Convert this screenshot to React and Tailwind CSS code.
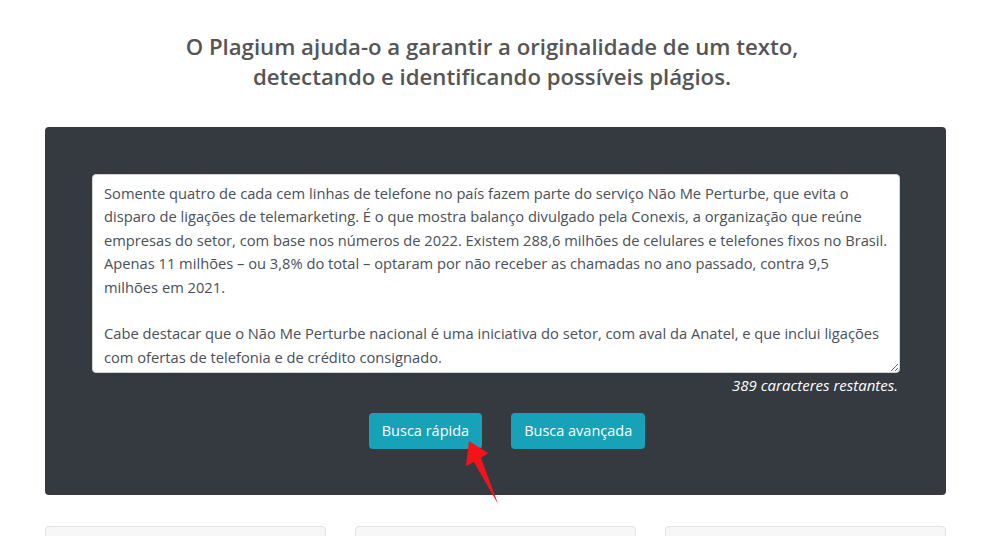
import React from 'react';

const bodyText =
  'Somente quatro de cada cem linhas de telefone no país fazem parte do serviço Não Me Perturbe, que evita o disparo de ligações de telemarketing. É o que mostra balanço divulgado pela Conexis, a organização que reúne empresas do setor, com base nos números de 2022. Existem 288,6 milhões de celulares e telefones fixos no Brasil. Apenas 11 milhões – ou 3,8% do total – optaram por não receber as chamadas no ano passado, contra 9,5 milhões\u00a0em\u00a02021.\n\nCabe destacar que o Não Me Perturbe nacional é uma iniciativa do setor, com aval da Anatel, e que inclui ligações com ofertas de telefonia e de crédito consignado.';

export default function App() {
  return (
    <div className="relative w-[984px] h-[536px] overflow-hidden bg-white font-['Open_Sans',sans-serif]">
      <h1 className="pt-[32px] text-center text-[22.2px] leading-[30px] font-semibold text-[#555]">
        O Plagium ajuda-o a garantir a originalidade de um texto,
        <br />
        detectando e identificando possíveis plágios.
      </h1>

      <div className="ml-[45px] mt-[35px] h-[368px] w-[901px] rounded bg-[#343a40] pl-[47px] pr-[46px] pt-[47px]">
        <textarea
          readOnly
          defaultValue={bodyText}
          className="block h-[199px] w-full resize-y rounded border border-[#ced4da] bg-white pl-[11px] pr-[5px] pt-[7px] text-[14.7px] leading-[23.4px] text-[#495057] outline-none"
        />
        <p className="mt-[1px] pr-[2px] text-right text-[15px] italic text-white">
          389 caracteres restantes.
        </p>

        <div className="mt-[16px] flex justify-center gap-[29px] pl-[22px]">
          <button className="h-[36px] rounded bg-[#17a2b8] px-[13px] text-[14.5px] text-white">
            Busca rápida
          </button>
          <button className="h-[36px] rounded bg-[#17a2b8] px-[13px] text-[14.5px] text-white">
            Busca avançada
          </button>
        </div>
      </div>

      <div className="ml-[45px] mt-[31px] grid w-[901px] grid-cols-3 gap-[29px]">
        <div className="h-[40px] rounded border border-[#e3e3e3] bg-[#f7f7f7]" />
        <div className="h-[40px] rounded border border-[#e3e3e3] bg-[#f7f7f7]" />
        <div className="h-[40px] rounded border border-[#e3e3e3] bg-[#f7f7f7]" />
      </div>

      {/* red pointer arrow */}
      <svg
        className="absolute left-[460px] top-[436px]"
        width="45"
        height="72"
        viewBox="0 0 45 72"
      >
        <polygon
          points="9,5 28,17 21,22 38,68 14,26 6,30"
          fill="#f5131b"
        />
      </svg>
    </div>
  );
}
